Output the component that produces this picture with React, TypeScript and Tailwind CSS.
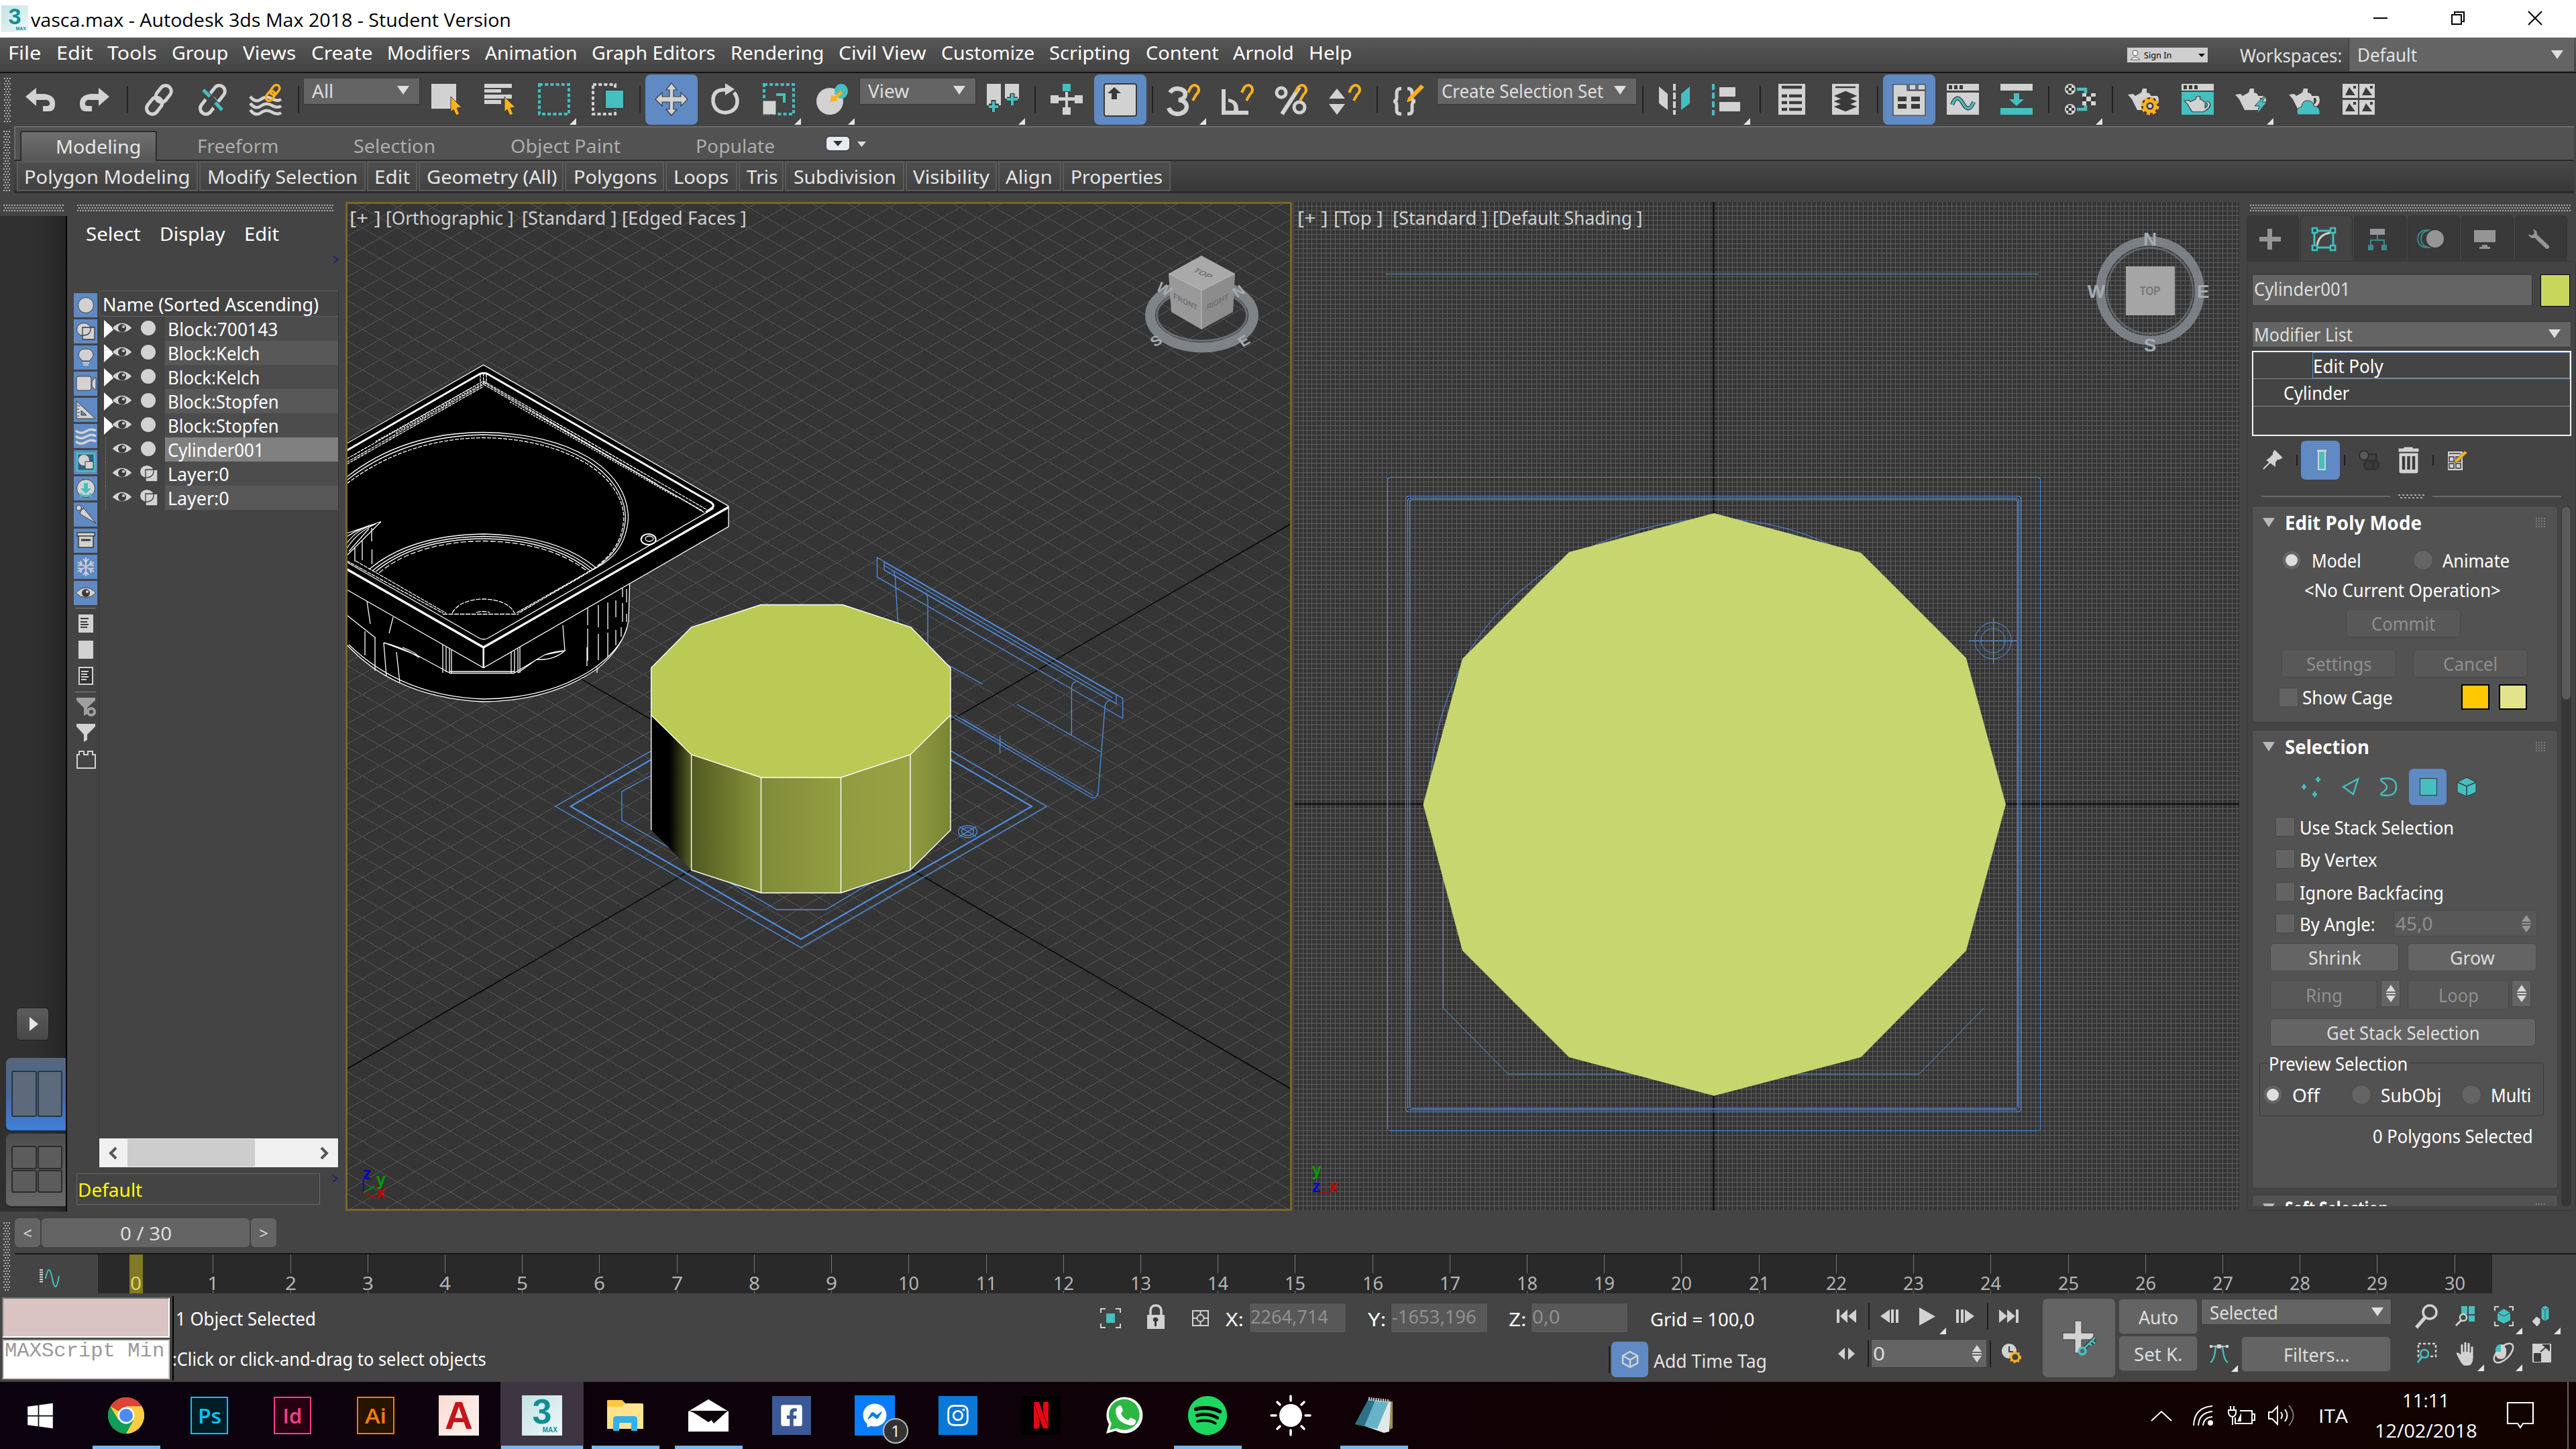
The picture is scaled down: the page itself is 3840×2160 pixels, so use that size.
import React, { useLayoutEffect, useRef, useState, type ReactNode } from "react";
import { FaWindows, FaSpotify, FaFacebookSquare, FaInstagram, FaFacebookMessenger } from "react-icons/fa";
import { SiNetflix } from "react-icons/si";

/* Label that is fitted horizontally to the given width. */
function T({ w, c = "", children }: { w: number; c?: string; children: string }) {
  const ref = useRef<HTMLSpanElement>(null);
  const [sx, setSx] = useState(1);
  useLayoutEffect(() => {
    const el = ref.current;
    if (el && el.offsetWidth) setSx((w + 4) / el.offsetWidth);
  }, [w, children]);
  return (
    <span className={"block shrink-0 whitespace-pre " + c} style={{ width: w }}>
      <span ref={ref} className="-ml-[2px] inline-block origin-left" style={{ transform: "scaleX(" + sx + ")" }}>{children}</span>
    </span>
  );
}

const G = "#d2d2d2";
const C = "#45bfc0";
const O = "#ffb11b";
const D = "#3a3a3a";

function Svg({ c = "h-12 w-12", box = "0 0 48 48", children }: { c?: string; box?: string; children: ReactNode }) {
  return <svg className={"block shrink-0 overflow-visible " + c} viewBox={box} fill="none" preserveAspectRatio="none">{children}</svg>;
}

function Grip({ id, c }: { id: string; c: string }) {
  return (
    <svg className={"block shrink-0 " + c} shapeRendering="crispEdges">
      <defs>
        <pattern id={id} width="4" height="8" patternUnits="userSpaceOnUse">
          <path d="M0 1h2M2 5h2" stroke="#b5b5b5" strokeWidth="1.4" />
        </pattern>
      </defs>
      <rect width="100%" height="100%" fill={"url(#" + id + ")"} />
    </svg>
  );
}

function Down({ c = "h-[13px] w-[18px]", fill = "#dedede" }: { c?: string; fill?: string }) {
  return <Svg c={c} box="0 0 18 13"><path d="M0 0h18L9 13z" fill={fill} /></Svg>;
}

/* ---------------- title, menu ---------------- */

function MaxLogo({ small = false }: { small?: boolean }) {
  return (
    <div className={"flex flex-col bg-gradient-to-br from-[#c3e2e2] to-[#eef8f8] font-['Liberation_Sans',sans-serif] font-bold text-[#0f8f94] " + (small ? "h-10 w-10" : "h-[60px] w-[60px]")}>
      <span className={small ? "h-[31px] text-center text-[34px] leading-[32px]" : "h-[46px] text-center text-[52px] leading-[48px]"}>3</span>
      <span className={small ? "pr-[3px] text-right text-[7px] leading-[8px]" : "pr-[7px] text-right text-[10px] leading-[11px]"}>MAX</span>
    </div>
  );
}

function TitleBar() {
  return (
    <div className="flex h-14 items-start bg-white text-black">
      <div className="ml-[2px] mt-2"><MaxLogo small /></div>
      <T w={712} c="ml-[6px] mt-[9px] font-['Open_Sans',sans-serif] text-[28px] leading-[40px]">vasca.max - Autodesk 3ds Max 2018 - Student Version</T>
      <div className="ml-auto mr-[51px] mt-[17px] flex items-center gap-[95px]">
        <Svg c="h-5 w-[21px]" box="0 0 21 20"><path d="M0 10h21" stroke="#000" strokeWidth="2" /></Svg>
        <Svg c="h-5 w-5" box="0 0 20 20"><path d="M1 5h14v14H1zM5 5V1h14v14h-4" stroke="#000" strokeWidth="2" /></Svg>
        <Svg c="h-5 w-5" box="0 0 20 20"><path d="M0 0l20 20M20 0L0 20" stroke="#000" strokeWidth="2" /></Svg>
      </div>
    </div>
  );
}

const MENUS: [string, number, number][] = [
  ["File", 14, 59], ["Edit", 86, 136], ["Tools", 162, 231], ["Group", 259, 339], ["Views", 366, 441], ["Create", 467, 554],
  ["Modifiers", 581, 700], ["Animation", 726, 859], ["Graph Editors", 886, 1066], ["Rendering", 1093, 1228],
  ["Civil View", 1255, 1381], ["Customize", 1407, 1542], ["Scripting", 1568, 1685], ["Content", 1711, 1815],
  ["Arnold", 1841, 1927], ["Help", 1953, 2013],
];

function MenuBar() {
  return (
    <div className="flex h-[53px] items-start border-b-2 border-[#111] bg-gradient-to-b from-[#575757] to-[#444] text-white">
      <div className="ml-[14px] mt-[6px] flex w-[2030px] gap-[26px] leading-[32px]">
        {MENUS.map(([m, a, b]) => <T key={m} w={b - a + 0.5}>{m}</T>)}
      </div>
      <div className="ml-auto mt-[15px] flex h-[22px] w-[120px] items-center bg-[#cfcfcf] text-black">
        <Svg c="ml-1 h-4 w-4" box="0 0 16 16"><circle cx="8" cy="5" r="4" fill="#fff" stroke="#555" /><path d="M1 15q7-8 14 0z" fill="#fff" stroke="#555" /></Svg>
        <T w={37} c="ml-[7px] text-[13px] leading-[16px]">Sign In</T>
        <Down c="ml-auto mr-[4px] h-[5px] w-[10px]" fill="#000" />
      </div>
      <T w={148} c="ml-[50px] mt-[9px] leading-[34px] text-[#e2e2e2]">Workspaces:</T>
      <div className="ml-[12px] mr-[3px] flex h-[50px] w-[336px] items-center border-l border-[#3b3b3b] bg-[#646464] text-[#e2e2e2]">
        <T w={85} c="ml-[14px]">Default</T>
        <Down c="ml-auto mr-[16px] h-[13px] w-[18px]" />
      </div>
    </div>
  );
}

/* ---------------- toolbar ---------------- */

function Slot({ on = false, fly = false, children }: { on?: boolean; fly?: boolean; children: ReactNode }) {
  return (
    <div className="relative flex h-[79px] w-20 shrink-0 items-start justify-center">
      {on && <div className="absolute left-px top-[2px] h-[75px] w-[78px] rounded-[8px] bg-[#5f8ac3]" />}
      <div className="relative mt-[15px]">{children}</div>
      {fly && <div className="absolute bottom-[2px] right-[7px]"><Svg c="h-[10px] w-[10px]" box="0 0 10 10"><path d="M10 0v10H0z" fill="#e4e4e4" /></Svg></div>}
    </div>
  );
}
const Sep = () => <div className="flex h-[79px] w-[15px] shrink-0 justify-center"><div className="mt-[19px] h-10 w-[2px] bg-[#222]" /></div>;

function Combo({ c, label, w }: { c: string; label: string; w: number }) {
  return (
    <div className={"mt-[7px] flex h-10 shrink-0 items-center border border-[#3a3a3a] bg-[#646464] pb-[3px] text-[#dedede] " + c}>
      <T w={w}>{label}</T>
      <Down c="ml-auto mr-[15px] h-[13px] w-[18px]" />
    </div>
  );
}

const magnet = (x: number, y: number) => (
  <g transform={"translate(" + x + "," + y + ")"}><path d="M2 11L6 3Q12-3 17 3Q20 9 14 14L9 23" stroke={O} strokeWidth="4" /></g>
);
const teapot = (
  <path d="M22 8h6v6q6 1 6 5h10q6 10-6 18l-4 3H14L6 24l-6-7 8-1 3 3 9-5z M37 22v10q6-4 3-10z" fill={G} fillRule="evenodd" />
);
const chain = (
  <>
    <rect x="22" y="2" width="17" height="27" rx="8.5" transform="rotate(38 30 16)" stroke={G} strokeWidth="5" />
    <rect x="9" y="20" width="17" height="27" rx="8.5" transform="rotate(38 17 33)" stroke={G} strokeWidth="5" />
  </>
);

function Toolbar() {
  return (
    <div className="flex h-[79px] items-start bg-[#444]">
      <Grip id="g-tool" c="ml-[6px] mt-[7px] h-[66px] w-[10px]" />
      <div className="ml-[6px] flex">
        <Slot><Svg><path d="M0 20L16 7v9h12q17 2 16 16 0 10-10 10h-8v-8h7q4-1 3-5-2-5-8-4H16v9z" fill={G} /></Svg></Slot>
        <Slot><Svg><path d="M45 20L29 7v9H17Q0 18 1 32q0 10 10 10h8v-8h-7q-4-1-3-5 2-5 8-4h12v9z" fill={G} /></Svg></Slot>
        <Sep />
        <Slot><Svg>{chain}</Svg></Slot>
        <Slot><Svg>{chain}<path d="M12 14l20 22" stroke="#444" strokeWidth="11" /><path d="M10 10l10 10M28 29l10 11" stroke={C} strokeWidth="5" /></Svg></Slot>
        <Slot><Svg><path d="M0 20q8 10 16 4t16-1 14 1M0 30q8 10 16 4t16-1 14 1M0 40q8 10 16 4t16-1 14 1" stroke={G} strokeWidth="4.5" /><rect x="32" y="2" width="10" height="16" rx="5" transform="rotate(38 37 10)" stroke={O} strokeWidth="3.5" /><rect x="25" y="11" width="10" height="16" rx="5" transform="rotate(38 30 19)" stroke={O} strokeWidth="3.5" /></Svg></Slot>
        <Sep />
        <Combo c="w-[174px] pl-[14px]" label="All" w={28} />
        <Slot><Svg><path d="M1 1h37v37H1z" fill={G} /><path d="M30 20l16 16-7 1 4 9-5 2-4-9-4 4z" fill={O} stroke={D} strokeWidth="1" /></Svg></Slot>
        <Slot><Svg><path d="M0 1h41v6H0zM0 9h25v5H0zM0 17h41v6H0zM0 25h25v6H0z" fill={G} /><path d="M30 20l16 16-7 1 4 9-5 2-4-9-4 4z" fill={O} stroke={D} strokeWidth="1" /></Svg></Slot>
        <Slot fly><Svg><path d="M2 2h44v44H2z" stroke={C} strokeWidth="4" strokeDasharray="5 3.2" /></Svg></Slot>
        <Slot><Svg><path d="M2 2h33v44H2z" stroke={G} strokeWidth="4" strokeDasharray="5 3.2" /><path d="M20 10h28v28H20z" fill={C} stroke={D} strokeWidth="2" /></Svg></Slot>
        <Sep />
        <Slot on><Svg><path d="M24 0l8 10h-5v10h11v-6l10 10-10 10v-6H27v11h5l-8 9-8-9h5V28H10v6L0 24l10-10v6h11V10h-5z" fill={G} stroke={D} strokeWidth="1.2" /></Svg></Slot>
        <Slot><Svg><path d="M27 10Q5 8 6 27q2 16 18 17 19-2 18-19-1-7-5-11" stroke={G} strokeWidth="5.5" /><path d="M24 0l14 9-14 9z" fill={G} /></Svg></Slot>
        <Slot fly><Svg><path d="M2 2h44v44H2z" stroke={C} strokeWidth="4" strokeDasharray="5 3.2" /><path d="M0 26h20v21H0z" fill={G} stroke={D} /><path d="M20 17h12v12" stroke={C} strokeWidth="4" /></Svg></Slot>
        <Slot fly><Svg><circle cx="20" cy="27" r="20" fill={G} /><ellipse cx="37" cy="12" rx="10" ry="11" fill={C} /><path d="M38 13L25 24" stroke={O} strokeWidth="5" /><path d="M20 28l3-11 9 9z" fill={O} /></Svg></Slot>
        <Combo c="w-[174px] pl-[14px]" label="View" w={57} />
        <Slot fly><Svg><path d="M0 1h21v32H0zM27 1h21v22H27z" fill={G} /><path d="M10 25v18M3 34h15M38 15v18M30 24h16" stroke={D} strokeWidth="7" /><path d="M10 27v16M3 35h14M38 16v17M30 24h16" stroke={C} strokeWidth="4" /></Svg></Slot>
        <Sep />
        <Slot><Svg><path d="M18 1h12v11H18z" fill={C} /><path d="M22 13h4v23h-4zM0 18h12v3h24v-3h12v12H36v-4H12v4H0zM18 36h12v11H18z" fill={G} /></Svg></Slot>
        <Slot on><Svg><rect width="48" height="48" y="1" rx="3" fill={G} stroke={D} strokeWidth="2" /><path d="M15 6l10 9h-6v9h-8v-9H5z" fill={D} /></Svg></Slot>
        <Sep />
        <Slot fly><Svg><path d="M3 14Q7 8 14 8q12 1 12 9-1 7-10 8 11 1 12 10-1 10-14 11Q4 45 1 37" stroke={G} strokeWidth="6.5" />{magnet(28, 3)}</Svg></Slot>
        <Slot><Svg><path d="M0 9h6v32h12q2-12-8-13v-5q16 2 15 18h15v6H0z" fill={G} />{magnet(28, 3)}</Svg></Slot>
        <Slot><Svg><circle cx="9" cy="14" r="7" stroke={G} strokeWidth="5" /><circle cx="36" cy="36" r="8" stroke={G} strokeWidth="5" /><path d="M36 6L10 46" stroke={G} strokeWidth="6" />{magnet(28, 3)}</Svg></Slot>
        <Slot><Svg><path d="M12 8l12 15H0zM12 47L0 31h24z" fill={G} />{magnet(28, 3)}</Svg></Slot>
        <Sep />
        <Slot><Svg><path d="M13 8Q6 8 6 14v8q0 5-5 5 5 0 5 6v8q0 5 7 5M22 8q7 0 7 6v8q0 5 5 5-5 0-5 6v8q0 5-7 5" stroke={G} strokeWidth="5" /><path d="M42 2l5 4-21 21-5 1 2-6z" fill={O} /></Svg></Slot>
        <Combo c="ml-[2px] w-[298px] pl-[8px]" label="Create Selection Set" w={237} />
        <div className="w-px" />
        <Sep />
        <Slot><Svg><path d="M1 5l13 11v24L1 30z" fill={G} /><path d="M47 5L34 16v24l13-10z" fill={C} /><path d="M24 1v46" stroke={G} strokeWidth="4" strokeDasharray="10 3" /></Svg></Slot>
        <Slot fly><Svg><path d="M2 1v47" stroke={C} strokeWidth="4" strokeDasharray="9 4" /><path d="M11 6h24v14H11zM11 28h31v14H11z" fill={G} /></Svg></Slot>
        <Sep />
        <Slot><Svg><path d="M4 1h40v46H4z" fill={G} /><path d="M9 6h30M9 19h8m3 0h19M9 29h8m3 0h19M9 39h8m3 0h19" stroke={D} strokeWidth="4.5" /></Svg></Slot>
        <Slot><Svg><path d="M4 1h40v46H4z" fill={G} /><path d="M9 6h30M24 13l14 6-14 6-14-6zM10 27l14 6 14-6-14-5zM10 35l14 6 14-6-14-5z" fill={D} stroke={D} strokeWidth="2.5" /></Svg></Slot>
        <Sep />
        <Slot on><Svg><path d="M0 2h21v9h27v37H0zM24 2h10v8H24zM37 2h11v8H37z" fill={G} stroke={D} strokeWidth="1.2" /><path d="M7 20h13v7H7zM27 20h13v7H27zM7 31h13v7H7zM27 31h13v7H27z" fill={D} /></Svg></Slot>
        <Slot><Svg><path d="M0 1h48v10H0zM0 14h48v33H0z" fill={G} /><path d="M3 3h5v6H3zM11 3h5v6h-5zM19 3h5v6h-5z" fill={D} /><path d="M8 32q7-18 16-2t16-2" stroke={D} strokeWidth="6" /><path d="M8 32q7-18 16-2t16-2" stroke={C} strokeWidth="3.5" /></Svg></Slot>
        <Slot><Svg><path d="M0 1h48v10H0z" fill={G} /><path d="M20 15h8v9h7L24 34 13 24h7zM0 37h48v10H0z" fill={C} /></Svg></Slot>
        <Sep />
        <Slot fly><Svg><circle cx="9" cy="9" r="8" fill={G} /><circle cx="9" cy="39" r="8" fill={G} /><path d="M19 9h13v6M19 39h13v-6" stroke={C} strokeWidth="4.5" /><path d="M27 15h20v18H27z" fill={G} /><path d="M6 3h5v4H6zM3 7h4v4H3zM11 7h4v4h-4zM6 11h5v4H6zM6 33h5v4H6zM3 37h4v4H3zM11 37h4v4h-4zM6 41h5v4H6zM33 15h7v5h-7zM27 20h6v7h-6zM40 20h7v7h-7zM33 27h7v6h-7z" fill={D} /></Svg></Slot>
        <Sep />
        <Slot><Svg>{teapot}<circle cx="33" cy="34" r="8" stroke={D} strokeWidth="10" /><circle cx="33" cy="34" r="11.5" stroke={O} strokeWidth="4" strokeDasharray="5 4" /><circle cx="33" cy="34" r="8" stroke={O} strokeWidth="5" /></Svg></Slot>
        <Slot><Svg><path d="M0 1h48v10H0z" fill={G} /><path d="M3 3h5v6H3zM11 3h5v6h-5zM19 3h5v6h-5z" fill={D} /><path d="M0 13h48v34H0z" fill={C} /><g transform="translate(4,14) scale(.84 .72)" stroke={D} strokeWidth="1.5">{teapot}</g></Svg></Slot>
        <Slot fly><Svg>{teapot}<path d="M42 20L29 34h7l-4 13 15-19h-7l5-8z" fill={C} stroke={D} /></Svg></Slot>
        <Slot><Svg>{teapot}<path d="M13 47q-4-10 6-12 1-10 10-9 8 1 8 8 11 1 9 13z" fill={C} stroke={D} /></Svg></Slot>
        <Slot><Svg><path d="M0 1h23v21H0zM25 1h23v21H25zM0 25h23v22H0zM25 25h23v22H25z" fill={G} /><path d="M4 18l6-12 9 12zM29 18l6-12 9 12zM4 42l6-12 9 12zM29 42l6-12 9 12z" fill={D} /><path d="M16 4h4v4h-4zM41 4h4v4h-4zM16 28h4v4h-4zM41 28h4v4h-4z" fill={D} /></Svg></Slot>
      </div>
    </div>
  );
}

/* ---------------- ribbon ---------------- */

const PANELS: [string, string, number][] = [
  ["Polygon Modeling", "w-[270px] pl-[11px]", 243], ["Modify Selection", "w-[248px] pl-[12px]", 220], ["Edit", "w-[75px] pl-[11px]", 49],
  ["Geometry (All)", "w-[216px] pl-[12px]", 190], ["Polygons", "w-[148px] pl-[13px]", 120], ["Loops", "w-[107px] pl-[12px]", 78],
  ["Tris", "w-[67px] pl-[12px]", 42], ["Subdivision", "w-[178px] pl-[13px]", 149], ["Visibility", "w-[136px] pl-[11px]", 110],
  ["Align", "w-[94px] pl-[11px]", 66], ["Properties", "w-[161px] pl-[12px]", 133],
];

function Ribbon() {
  return (
    <div className="flex h-[100px]">
      <Grip id="g-rib" c="ml-[5px] mt-[7px] h-[90px] w-[10px]" />
      <div className="ml-[6px] mr-[3px] flex-1">
        <div className="flex h-[50px] items-start border-l-2 border-t-2 border-[#6b6b6b] bg-[#525252] text-[#adadad]">
          <div className="ml-[7px] mt-[5px] flex h-[45px] w-[204px] items-center rounded-t border-2 border-b-0 border-[#2c2c2c] bg-gradient-to-b from-[#707070] to-[#565656] pb-[2px] text-[#e6e6e6]"><T w={123} c="ml-[53px]">Modeling</T></div>
          <div className="mt-[7px] flex h-[42px] items-center pb-[3px]">
            <T w={117} c="ml-[62px]">Freeform</T>
            <T w={118} c="ml-[116px]">Selection</T>
            <T w={160} c="ml-[116px]">Object Paint</T>
            <T w={114} c="ml-[116px]">Populate</T>
          </div>
          <div className="ml-[79px] mt-[14px] flex h-5 w-[34px] items-center justify-center rounded-[5px] bg-[#e8ecf2] shadow-[0_0_3px_#2a3040]"><Down c="h-[8px] w-[14px]" fill="#333" /></div>
          <Down c="ml-[12px] mt-[21px] h-[8px] w-[13px]" />
        </div>
        <div className="flex h-[50px] items-start gap-[2px] border-b-[3px] border-t-2 border-[#2a2a2a] bg-gradient-to-b from-[#484848] to-[#383838] pl-[4px] text-[#e6e6e6]">
          {PANELS.map(([n, c, w]) => (
            <div key={n} className={"flex h-[45px] shrink-0 items-center border-2 border-[#5c5c5c] bg-gradient-to-b from-[#4e4e4e] to-[#424242] " + c}><T w={w}>{n}</T></div>
          ))}
        </div>
      </div>
    </div>
  );
}

/* ---------------- scene explorer ---------------- */

function ViewTabs() {
  return (
    <div className="flex w-[100px] shrink-0 flex-col">
      <Grip id="g-vt" c="ml-[5px] mt-[17px] h-[10px] w-[90px]" />
      <div className="mt-[7px] flex h-[1484px] flex-col border-r-2 border-black bg-gradient-to-r from-[#303030] via-[#303030] to-[#262626]">
        <div className="ml-6 mt-[1180px] flex h-[49px] w-[49px] items-center justify-center rounded-[6px] border border-[#222] bg-gradient-to-b from-[#5c5c5c] to-[#484848]">
          <Svg c="ml-[3px] h-[21px] w-[13px]" box="0 0 13 21"><path d="M0 0l13 10.5L0 21z" fill="#e8e8e8" /></Svg>
        </div>
        <div className="ml-[9px] mt-[26px] flex h-[110px] gap-[1px] rounded-l-[8px] border-b-2 border-[#1a2a44] bg-gradient-to-b from-[#56667c] via-[#45699f] to-[#3f80da] pb-[20px] pl-[8px] pr-[5px] pt-[19px]">
          <div className="flex-1 rounded-[3px] border-2 border-[#2a3442] bg-[#5d6a7b]" />
          <div className="flex-1 rounded-[3px] border-2 border-[#2a3442] bg-[#5d6a7b]" />
        </div>
        <div className="ml-[9px] mt-[3px] grid h-[110px] grid-cols-2 gap-[1px] rounded-l-[8px] border-b-2 border-[#222] bg-gradient-to-b from-[#4e4e4e] to-[#686868] pb-[20px] pl-[8px] pr-[5px] pt-[18px]">
          {[0, 1, 2, 3].map(i => <div key={i} className="rounded-[3px] border-2 border-[#2c2c2c] bg-[#5c5c5c]" />)}
        </div>
      </div>
    </div>
  );
}

const eye = (
  <>
    <path d="M0 10Q15-6 30 10 15 24 0 10z" fill={G} stroke={D} strokeWidth="1" />
    <circle cx="15" cy="10" r="6" fill={D} /><circle cx="17" cy="8" r="2" fill={G} />
  </>
);
const shape = <><ellipse cx="11" cy="10" rx="10.5" ry="9.5" fill={G} stroke={D} /><path d="M9 7h18v18H9z" fill={G} /><path d="M9 16V7h18v18H9zM9 19q13 0 12-12" stroke={D} strokeWidth="1.3" /></>;

const FILTERS: ReactNode[] = [
  <circle cx="15" cy="15" r="11.5" fill={G} stroke={D} />,
  <g transform="translate(1,2)">{shape}</g>,
  <><path d="M10 20Q4 14 4 11q1-9 11-9t11 9q0 3-6 9z" fill={G} stroke={D} /><path d="M10 23h10M11 26h8" stroke={G} strokeWidth="2" /></>,
  <><rect x="1" y="4" width="22" height="21" rx="3" fill={G} stroke={D} /><path d="M24 11l6-6v20l-6-6z" fill={G} stroke={D} /></>,
  <><path d="M1 2l28 26H1z" fill={G} stroke={D} /><path d="M8 16l8 7H8z" fill="#5f8ac3" stroke={D} /><path d="M2 9h4M2 14h3M2 19h4M2 24h3" stroke={D} /></>,
  <path d="M0 7q7 6 15 1t15-1M0 15q7 6 15 1t15-1M0 23q7 6 15 1t15-1" stroke={G} strokeWidth="3.5" />,
  <><path d="M2 2h26v26H2z" fill="#3b5a80" stroke={C} strokeWidth="3" /><circle cx="12" cy="12" r="8" fill={G} /><path d="M14 14h12v11H14z" fill={G} stroke={D} /></>,
  <><circle cx="15" cy="15" r="13.5" fill={G} stroke={D} /><path d="M12 7h6v8h5l-8 8-8-8h5z" fill={C} /><path d="M8 22v4h14v-4" stroke={C} strokeWidth="3" /></>,
  <><circle cx="4.5" cy="5" r="4" fill={G} stroke={D} /><path d="M10 7q-3 2-4 7l24 14L12 6z" fill={G} stroke={D} /></>,
  <><path d="M2 3h26v5H2zM4 8h22v17H4z" fill={G} stroke={D} strokeWidth="1.5" /><path d="M8 14h14" stroke={D} strokeWidth="3" /></>,
  <path d="M15 1v28M3 8l24 14M27 8L3 22M11 3l4 5 4-5M11 27l4-5 4 5M3 13l6-1-2-6M27 13l-6-1 2-6M3 17l6 1-2 6M27 17l-6 1 2 6" stroke={G} strokeWidth="2" />,
  <g transform="translate(0,5)">{eye}</g>,
];

const NODES: [string, number, boolean, boolean][] = [
  ["Block:700143", 160, true, false], ["Block:Kelch", 133, true, false], ["Block:Kelch", 133, true, false], ["Block:Stopfen", 162, true, false],
  ["Block:Stopfen", 162, true, false], ["Cylinder001", 139, false, false], ["Layer:0", 88, false, true], ["Layer:0", 88, false, true],
];
const ROWBG = ["bg-[#4c4c4c]", "bg-[#585858]", "bg-[#4c4c4c]", "bg-[#585858]", "bg-[#4c4c4c]", "bg-[#808080]", "bg-[#4c4c4c]", "bg-[#585858]"];

function Explorer() {
  return (
    <div className="flex w-[415px] shrink-0 flex-col text-white">
      <Grip id="g-ex" c="ml-[15px] mt-[17px] h-[10px] w-[382px]" />
      <div className="ml-[30px] mt-[17px] flex h-[32px] items-center">
        <T w={78}>Select</T><T w={94} c="ml-[32px]">Display</T><T w={48} c="ml-[32px]">Edit</T>
      </div>
      <Svg c="ml-[396px] mt-[17px] h-[12px] w-[9px]" box="0 0 9 12"><path d="M1 1l7 5-7 5" stroke="#24246a" strokeWidth="2" /></Svg>
      <div className="mt-[40px] flex">
        <div className="ml-[10px] flex w-[35px] flex-col pt-[4px]">
          {FILTERS.map((f, i) => (
            <div key={i} className="mb-[3px] flex h-9 w-[35px] items-center justify-center bg-[#5f8ac3]"><Svg c="h-[30px] w-[30px]" box="0 0 30 30">{f}</Svg></div>
          ))}
          <div className="mx-[2px] mt-[1px] h-px bg-[#888]" />
          <Svg c="ml-[7px] mt-[9px] h-[27px] w-[22px]" box="0 0 22 27"><path d="M0 0h22v27H0z" fill={G} /><path d="M3 6h12M3 11h10M3 15h12M3 19h10" stroke={D} strokeWidth="2" /></Svg>
          <Svg c="ml-[7px] mt-[12px] h-[27px] w-[22px]" box="0 0 22 27"><path d="M0 0h22v27H0z" fill={G} /></Svg>
          <Svg c="ml-[7px] mt-[12px] h-[27px] w-[22px]" box="0 0 22 27"><path d="M1 1h20v25H1z" fill="#333" stroke={G} strokeWidth="2" /><path d="M4 7h11M4 11h9M4 15h11M4 19h8" stroke={G} strokeWidth="2" /></Svg>
          <div className="mx-[2px] mt-[10px] h-px bg-[#888]" />
          <Svg c="ml-[4px] mt-[8px] h-[28px] w-[29px]" box="0 0 29 28"><path d="M0 0h28v4L16 15v9l-5 3V15L0 4z" fill="#a0a0a0" /><circle cx="22" cy="21" r="5" stroke="#a0a0a0" strokeWidth="4" /></Svg>
          <Svg c="ml-[4px] mt-[11px] h-[28px] w-[28px]" box="0 0 28 28"><path d="M0 0h28v4L16 16v8l-5 3V16L0 4z" fill={G} /></Svg>
          <Svg c="ml-[4px] mt-[11px] h-[28px] w-[29px]" box="0 0 29 28"><path d="M1 27V7h3V2h7v5h6V2h7v5h4v20z" stroke={G} strokeWidth="2" /></Svg>
        </div>
        <div className="ml-[2px] flex h-[1307px] w-[358px] flex-col border-x border-[#353535]">
          <div className="flex h-[39px] items-center border border-r-0 border-[#606060]"><T w={318} c="ml-[6px]">Name (Sorted Ascending)</T></div>
          {NODES.map(([n, w, exp, layer], i) => (
            <div key={i} className="flex h-9 items-center">
              <div className="ml-[7px] flex w-[12px] justify-start">
                {exp ? <Svg c="h-[27px] w-[15px]" box="0 0 15 27"><path d="M0 0l15 13.500L0 27z" fill="#fff" /></Svg> : <div className="ml-[2px] h-9 w-[10px] border-l border-dotted border-[#777]" />}
              </div>
              <Svg c="mb-[2px] h-[20px] w-[30px]" box="0 0 30 20">{eye}</Svg>
              <div className="ml-[11px] flex w-[38px] items-center">
                {layer ? <Svg c="h-[27px] w-[27px]" box="0 0 27 27">{shape}</Svg> : <Svg c="mb-[3px] ml-[2px] h-[22px] w-[22px]" box="0 0 22 22"><circle cx="11" cy="11" r="11" fill={G} /></Svg>}
              </div>
              <div className={"flex h-9 flex-1 items-center pl-[6px] " + ROWBG[i]}><T w={w}>{n}</T></div>
            </div>
          ))}
          <div className="mt-auto flex h-[43px] items-center bg-[#f0f0f0]">
            <Svg c="ml-[12px] h-[18px] w-[16px]" box="0 0 16 18"><path d="M13 1L5 9l8 8" stroke="#555" strokeWidth="4" /></Svg>
            <div className="ml-[14px] h-[41px] w-[190px] bg-[#cdcdcd]" />
            <Svg c="ml-auto mr-[12px] h-[18px] w-[16px]" box="0 0 16 18"><path d="M3 1l8 8-8 8" stroke="#555" strokeWidth="4" /></Svg>
          </div>
        </div>
      </div>
      <div className="ml-[14px] mt-[9px] flex items-start">
        <div className="flex h-[47px] w-[363px] items-center border border-[#666] text-[#ffff00]"><T w={92} c="ml-[3px] mt-[1px]">Default</T></div>
        <Svg c="ml-[18px] mt-[2px] h-[12px] w-[9px]" box="0 0 9 12"><path d="M1 1l7 5-7 5" stroke="#24246a" strokeWidth="2" /></Svg>
      </div>
    </div>
  );
}

/* ---------------- viewports ---------------- */

const OX = 1195, OY = 1202, K = 0.5774;
function isoGrid() {
  let d = "";
  for (let i = -70; i <= 70; i++) {
    const x = OX + i * 52.4;
    d += "M" + (x - 1600) + " " + (OY - 1600 * K) + "L" + (x + 1600) + " " + (OY + 1600 * K);
    d += "M" + (x - 1600) + " " + (OY + 1600 * K) + "L" + (x + 1600) + " " + (OY - 1600 * K);
  }
  return d;
}
function topGrid() {
  let d = "";
  for (let i = -135; i <= 135; i++) {
    const x = Math.round(2554 + i * 6.96) + 0.5;
    const y = Math.round(1198 + i * 6.96) + 0.5;
    d += "M" + x + " 301V1804M1930 " + y + "H3338";
  }
  return d;
}
const B = "#4f8fe8";

function LabelBar({ c, items }: { c: string; items: [string, number, string][] }) {
  return <div className={"absolute flex leading-[32px] text-[#d0d0d0] " + c}>{items.map(([t, w, m]) => <T key={t} w={w} c={m}>{t}</T>)}</div>;
}

function OrthoView() {
  return (
    <div className="relative mt-[13px] h-[1504px] w-[1411px] shrink-0 overflow-hidden bg-[#353535]">
      <svg className="block h-full w-full" viewBox="515 301 1411 1504" fill="none">
        <defs>
          <linearGradient id="s1"><stop offset=".45" stopColor="#000" /><stop offset="1" stopColor="#5a6327" /></linearGradient>
          <linearGradient id="s2"><stop offset="0" stopColor="#525a22" /><stop offset="1" stopColor="#87933b" /></linearGradient>
          <linearGradient id="s3"><stop offset="0" stopColor="#808b38" /><stop offset="1" stopColor="#939f41" /></linearGradient>
          <linearGradient id="s4"><stop offset="0" stopColor="#909c40" /><stop offset="1" stopColor="#96a243" /></linearGradient>
          <linearGradient id="s5"><stop offset="0" stopColor="#909c40" /><stop offset="1" stopColor="#7a8534" /></linearGradient>
        </defs>
        <path d={isoGrid()} stroke="#525252" strokeWidth="1" shapeRendering="crispEdges" />
        <path d={"M115 " + (OY + 1080 * K) + "L2275 " + (OY - 1080 * K) + "M115 " + (OY - 1080 * K) + "L2275 " + (OY + 1080 * K)} stroke="#000" strokeWidth="1.4" />

        {/* shower tray */}
        <path d="M517 961V659L720.7 544 1086 754.500V785L938.600 870.500 937 925Q930 965 889.500 997.500 820 1045 720.700 1046 590 1040 517 961z" fill="#000" />
        <g stroke="#fff" strokeWidth="1.3">
          <path d="M517 661L720.700 544 1086 754.500V785L720.700 995.600 517 879" />
          <path d="M938.600 870.500L937 925Q930 965 889.500 997.500 820 1045 720.700 1046 590 1040 517 961M935 935Q925 970 880 1000 815 1041 720.700 1042 600 1038 520 961" />
          <path d="M720.700 965V995.600" strokeWidth="2.500" />
          <path d="M517 671.500L715 557.500Q720.700 555 727 557.500L1060 749Q1067 754 1060 758L1052 764" strokeWidth="3" />
          <path d="M517 848.500L720.700 965 1086 756" strokeWidth="3.400" />
          <path d="M517 838L714 951Q720.700 955 728 951L1064 758" />
          <path d="M517 684L720.700 568 1054 760M517 689L720.700 573 1048 762M517 692L720.700 576M720.700 570L1050 764M716 558v14M720.700 556v18M725 558v14" strokeDasharray="5 1" />
          <path d="M590 645L720.700 571M560 658L700 580M760 599L1010 742M800 617L980 722" strokeDasharray="3 1.500" />
          <path d="M517 711Q600 645 720.700 644.500C850 646 936 700 936.500 772 934 815 910 835 889 846.500" />
          <path d="M517 716Q600 650 720.700 648C845 650 931 703 932.500 772 930 813 908 832 889 846.500" />
          <path d="M517 721Q605 654 720.700 652.500C840 654 928 706 930 772 927 815 905 832 885 848" strokeDasharray="6 2" />
          <path d="M550 849Q610 798 720.700 796 830 798 888 846M555 851Q615 801 720.700 799.500 825 801 884 849M560 852Q618 804 720.700 803 822 804 880 851" />
          <path d="M565 854Q620 808 720.700 806.500 820 808 876 852" strokeDasharray="8 3" />
          <path d="M889 846.500L773 914M885 848L769 914M517 836L660 914M530 836L665 914" strokeDasharray="6 1" />
          <path d="M660 915.500H773M674 914Q685 894 720.700 893 757 894 767 914M710 913q10-3 20 0" strokeDasharray="7 1.500" />
          <path d="M517 795L568 777.500 517 828M517 800Q540 785 560 781M517 810Q530 790 560 781M517 818Q530 795 560 781M520 822L550 788M554 787v20M540 806v29M529 815v22M554.500 819v22" />
          <path d="M517 917L560 951M547 896L552 930M586 920L580 944M544 941v36M559 950v50M572 958L576 1008M591 972L596 1018M572 958L622 977 670 1003M572 958Q600 965 625 980M660 961v42M665 964v38M670 967v36M673 969v34M670 1001h97M670 1003.500h97M762 972v31M767 970v33M772 967v36M775 965v38M767 1003L812 976 842 970Q825 985 800 983L772 1003M839 932L842 970M812 976q15-5 30-6M600 965q20 8 22 12" />
          <path d="M876 907V932M876 937V985M892 902V935M892 945V984M875 965V993M890 995v8M906 898v40M906 943v36M918 895v25M918 939v23M928 877v13M928 899v28M934 878v20M934 915v12M926 935v14" />
          <ellipse cx="966.700" cy="804" rx="11" ry="8" strokeWidth="2" /><ellipse cx="968" cy="803" rx="6" ry="4" />
        </g>

        {/* wire outlines */}
        <g stroke={B} strokeWidth="1.300">
          <path d="M1194 990L1560 1202 1194 1412.600 828 1202z" />
          <path d="M1194 1003L1538 1202 1194 1400 850.500 1202z" strokeWidth="2.200" />
          <path d="M970.700 1156L927 1180V1223L1158 1356H1231L1300 1315" />
          <ellipse cx="1442.500" cy="1239.600" rx="14" ry="9" /><ellipse cx="1442.500" cy="1239.600" rx="9" ry="6" /><path d="M1430 1232l25 15M1455 1232l-25 15" />
          <path d="M1307.500 831L1673.700 1041V1071L1307.500 860z" />
          <path d="M1318 838L1664 1036V1049L1318 849.500zM1318 843L1658 1040M1332 857L1600 1012" />
          <path d="M1332 851.600Q1335 858 1335 870L1338.600 929M1381 885Q1383 890 1383 896V961M1411 990L1465 1020M1516 1050L1641 1121M1597.400 1096V1025Q1598 1017 1604 1016M1654 1044Q1647 1046 1647 1055L1637 1182Q1635 1191 1627 1189L1417 1067M1630 1186L1423 1066M1490.600 1096.500V1122.600M1435 1072L1545 1137" />
        </g>

        {/* cylinder */}
        <path d="M970.700 1066L1030.600 1125V1297L970.700 1237.500z" fill="url(#s1)" />
        <path d="M1030.600 1125L1134.500 1159V1331L1030.600 1297z" fill="url(#s2)" />
        <path d="M1134.500 1159H1253.500V1331H1134.500z" fill="url(#s3)" />
        <path d="M1253.500 1159L1357 1125V1297L1253.500 1331z" fill="url(#s4)" />
        <path d="M1357 1125L1417 1066V1237.500L1357 1297z" fill="url(#s5)" />
        <path d="M1134 901.500H1256L1358 935 1417 995.500V1066L1357 1125 1253.500 1159H1134.500L1030.600 1125 970.700 1066V995.500L1030.600 935z" fill="#bbca54" stroke="#fff" strokeWidth="1.400" />
        <path d="M970.700 1066V1237.500M1030.600 1125V1297L1134.500 1331H1253.500L1357 1297V1125M1134.500 1159V1331M1253.500 1159V1331M1357 1297L1417 1237.500V1066" stroke="#fff" strokeWidth="1.400" />

        {/* view cube */}
        <ellipse cx="1791.500" cy="470" rx="77" ry="48" stroke="#8b9097" strokeWidth="15" opacity=".85" />
        <ellipse cx="1791.500" cy="470" rx="67" ry="38" stroke="#6b6f75" strokeWidth="3" />
        <path d="M1791 381L1841 408 1791 433 1742 408z" fill="#a9a9a9" />
        <path d="M1742 408L1791 433V491L1746 465z" fill="#999" />
        <path d="M1841 408L1791 433V491L1838 465z" fill="#8c8c8c" />
        <path d="M1742 408L1791 433 1841 408M1791 433V491" stroke="#bdbdbd" />
        <g fontFamily="Liberation Sans, sans-serif" fontWeight="bold" fill="#6f7276" textAnchor="middle">
          <text transform="matrix(.87 .4 -.7 .5 1790 410)" fontSize="14">TOP</text>
          <text transform="matrix(.87 .45 0 1 1767 454)" fontSize="12">FRONT</text>
          <text transform="matrix(.87 -.45 0 1 1815 454)" fontSize="12">RIGHT</text>
          <g fill="#a7abb0" fontSize="22">
            <text transform="matrix(.87 .5 -.6 .8 1731 437)">W</text><text transform="matrix(.87 -.5 .6 .8 1851 440)">N</text>
            <text transform="matrix(.87 -.5 .6 .8 1728 514)">S</text><text transform="matrix(.87 -.5 .6 .8 1859 514)">E</text>
          </g>
        </g>

        {/* axis tripod */}
        <path d="M541.500 1778V1759" stroke="#0000c8" strokeWidth="1.500" /><path d="M541.500 1778L559 1768" stroke="#00a000" strokeWidth="1.500" /><path d="M541.500 1778L561 1786" stroke="#c80000" strokeWidth="1.500" />
        <g fontFamily="Noto Sans, sans-serif" fontSize="25" fontWeight="600"><text x="541" y="1758" fill="#0000c8">z</text><text x="561" y="1767" fill="#00a000">y</text><text x="561" y="1786" fill="#c80000">x</text></g>
      </svg>
      <div className="pointer-events-none absolute inset-0 border-[3px] border-[#7b6626]" />
      <LabelBar c="left-[8px] top-[7px]" items={[["[+ ]", 43, ""], ["[Orthographic ]", 187, "ml-[11px]"], ["[Standard ]", 137, "ml-[16px]"], ["[Edged Faces ]", 182, "ml-[12px]"]]} />
    </div>
  );
}

function TopView() {
  return (
    <div className="relative ml-1 mt-[13px] h-[1503px] w-[1408px] shrink-0 overflow-hidden bg-[#353535]">
      <svg className="block h-full w-full" viewBox="1930 301 1408 1503" fill="none">
        <path d={topGrid()} stroke="#5e5e5e" strokeWidth="1" shapeRendering="crispEdges" />
        <path d="M2554.500 301V1804M1930 1198.500H3338" stroke="#0a0a0a" strokeWidth="2" />
        <g stroke={B} strokeWidth="1" shapeRendering="crispEdges">
          <path d="M2065 408.500H3039" />
          <rect x="2068.500" y="711.500" width="973" height="974" rx="4" />
          <rect x="2095.500" y="739.500" width="917" height="918" rx="5" />
          <rect x="2098.500" y="742.500" width="911" height="912" rx="4" />
          <rect x="2101.500" y="744.500" width="906" height="908" rx="4" />
        </g>
        <g stroke={B} strokeWidth="1">
          <path d="M2151.500 1290V1503L2248 1601H2861L2957 1503" />
          <path d="M2130 1230Q2124 950 2340 830 2440 778 2555 772 2660 776 2740 818" />
          <circle cx="2971" cy="955" r="27" /><circle cx="2971" cy="955" r="18" /><path d="M2935 955.500h72M2971.500 920v70" />
        </g>
        <path d="M2555 765L2774 824 2931 981 2990 1199 2931 1417 2774 1576 2555 1633.500 2339 1576 2180 1417 2121.500 1199 2180 982 2339 823z" fill="#c8d66f" />
        <g opacity=".85">
          <circle cx="3205" cy="433.500" r="74" stroke="#858b94" strokeWidth="14" />
          <circle cx="3205" cy="433.500" r="64" stroke="#686c72" strokeWidth="3" />
        </g>
        <path d="M3169 397h73v73h-73z" fill="#a5a5a5" />
        <g fontFamily="Liberation Sans, sans-serif" fontWeight="bold" textAnchor="middle">
          <text x="3205" y="440" fontSize="18" fill="#74777c" textLength="31" lengthAdjust="spacingAndGlyphs">TOP</text>
          <g fontSize="28" fill="#a7abb0"><text x="3205" y="366">N</text><text x="3205" y="524">S</text><text x="3125" y="444">W</text><text x="3284" y="444">E</text></g>
        </g>
        <path d="M1967 1777h15" stroke="#c80000" strokeWidth="1.500" />
        <g fontFamily="Noto Sans, sans-serif" fontSize="25" fontWeight="600"><text x="1956" y="1752" fill="#00a000">y</text><text x="1956" y="1777" fill="#0000c8">z</text><text x="1981" y="1777" fill="#c80000">x</text></g>
      </svg>
      <LabelBar c="left-[6px] top-[7px]" items={[["[+ ]", 42, ""], ["[Top ]", 69, "ml-[12px]"], ["[Standard ]", 137, "ml-[19px]"], ["[Default Shading ]", 220, "ml-[12px]"]]} />
    </div>
  );
}

/* ---------------- command panel ---------------- */

function Check() { return <div className="h-[29px] w-[29px] shrink-0 border border-[#4a4a4a] bg-[#636363]" />; }
function Radio({ on = false }: { on?: boolean }) {
  return <div className="flex h-[30px] w-[30px] shrink-0 items-center justify-center rounded-full border border-[#4a4a4a] bg-[#646464]">{on && <div className="h-[18px] w-[18px] rounded-full bg-[#dedede]" />}</div>;
}
function Btn({ c, w, off = false, children }: { c: string; w: number; off?: boolean; children: string }) {
  return <div className={"flex shrink-0 items-center justify-center rounded-[6px] border border-[#4a4a4a] " + (off ? "bg-[#585858] text-[#8f8f8f] " : "bg-[#646464] text-[#dedede] ") + c}><T w={w}>{children}</T></div>;
}
function Spin({ fill = "#dedede" }: { fill?: string }) {
  return <Svg c="h-[26px] w-[14px]" box="0 0 14 26"><path d="M7 0l7 10H0zM7 26L0 16h14zM0 12h14v2H0z" fill={fill} fillOpacity=".95" /></Svg>;
}
function Head({ w, children }: { w: number; children: string }) {
  return (
    <div className="flex h-7 items-center">
      <Down c="ml-[15px] h-[14px] w-[18px]" fill="#b8b8b8" />
      <T w={w} c="ml-[17px] font-bold">{children}</T>
      <svg className="ml-auto mr-[18px] h-[14px] w-[14px]" viewBox="0 0 14 14"><path d="M0 1h14M0 5h14M0 9h14M0 13h14" stroke="#8c8c8c" strokeWidth="1.500" strokeDasharray="2 2" /></svg>
    </div>
  );
}
const M = "#959595";
const TABS: ReactNode[] = [
  <path d="M12 1h7v12h13v7H19v12h-7V20H0v-7h12z" fill={M} />,
  <><path d="M2 4h28v25H2z" stroke={C} strokeWidth="3" /><path d="M6 27Q8 9 26 7" stroke={G} strokeWidth="3" /><path d="M-1 0h7v7h-7zM26 0h7v7h-7zM-1 26h7v7h-7zM26 26h7v7h-7z" fill="#444" stroke={C} strokeWidth="2.500" /></>,
  <><path d="M5 1h22v9H5z" fill={M} /><path d="M16 10v8M6 25v-7h20v7" stroke="#3c8a8c" strokeWidth="2" /><path d="M2 25h8v8H2zM22 25h8v8h-8z" fill="#3c8a8c" /></>,
  <><circle cx="9" cy="16" r="13" stroke="#3c8a8c" strokeWidth="2" /><circle cx="14" cy="16" r="13" stroke="#3c8a8c" strokeWidth="2" /><circle cx="22" cy="16" r="14" fill={M} stroke="#393939" strokeWidth="2" /></>,
  <path d="M0 3h32v18H0zM12 25h8v3h4v3H8v-3h4z" fill={M} />,
  <><path d="M12 12L29 28" stroke={M} strokeWidth="6" strokeLinecap="round" /><path d="M8 2q6 1 6 7t-7 6q-5-1-6-6l5 2 4-3-1-4z" fill={M} /></>,
];

function CommandPanel() {
  return (
    <div className="ml-[11px] w-[491px] shrink-0">
      <Grip id="g-cp" c="ml-[5px] mt-[17px] h-[10px] w-[478px]" />
      <div className="mt-[6px] flex h-[68px] gap-[2px]">
        {TABS.map((t, i) => (
          <div key={i} className={"flex h-[68px] w-[78px] justify-center rounded-t-[6px] border-x border-t border-[#353535] " + (i === 1 ? "bg-[#444]" : "bg-[#393939]")}>
            <Svg c="-ml-[9px] mt-[18px] h-8 w-8" box="0 0 32 32">{t}</Svg>
          </div>
        ))}
      </div>
      <div className="h-[1416px] rounded-b-[6px] rounded-tr-[6px] border border-[#373737] pl-[7px] pt-[19px]">
        <div className="flex">
          <div className="flex h-[47px] w-[418px] items-center border border-[#3b3b3b] bg-[#646464] pb-[9px] text-[#dedede]"><T w={139} c="ml-[4px] mt-[3px]">Cylinder001</T></div>
          <div className="ml-[12px] h-[48px] w-[44px] border border-black bg-[#c8d65c]" />
        </div>
        <div className="mt-[22px] flex h-[39px] w-[476px] items-center border border-[#3b3b3b] bg-[#646464] pb-[2px] text-[#dedede]"><T w={143} c="ml-[4px]">Modifier List</T><Down c="ml-auto mr-[15px] h-[13px] w-[18px]" /></div>
        <div className="mt-[5px] h-[127px] w-[476px] border-2 border-[#f2f2f2] text-white">
          <div className="flex h-[40px] border-b border-[#888]"><div className="ml-[88px] flex flex-1 items-center border border-[#5f8ac3]"><T w={101} c="ml-[2px]">Edit Poly</T></div></div>
          <div className="flex h-[41px] items-center border-b border-[#888]"><T w={94} c="ml-[47px]">Cylinder</T></div>
        </div>
        <div className="mt-[7px] flex h-[58px] items-center">
          <Svg c="ml-[17px] h-[28px] w-[27px]" box="0 0 27 28"><path d="M17 0l10 10-3 2-3 0-4 5 0 5-11-8 4-3 5-5 0-3zM10 17L0 27" fill={G} stroke={G} strokeWidth="2" /></Svg>
          <div className="ml-[22px] h-4 w-[2px] bg-[#1d1d1d]" />
          <div className="ml-[5px] flex h-[58px] w-[58px] items-center justify-center rounded-[7px] bg-[#5f8ac3]"><Svg c="ml-1 h-[30px] w-[14px]" box="0 0 14 30"><path d="M2 1h10v28H2z" fill={C} stroke={G} strokeWidth="2" /><path d="M0 1h14" stroke={G} strokeWidth="3" /></Svg></div>
          <div className="ml-[6px] h-4 w-[2px] bg-[#1d1d1d]" />
          <Svg c="ml-[20px] h-[30px] w-[31px]" box="0 0 31 30"><circle cx="8" cy="8" r="7" fill="#5a5a5a" stroke="#2f2f2f" strokeWidth="2" /><circle cx="23" cy="22" r="7" fill={D} stroke="#2f2f2f" strokeWidth="2" /><circle cx="15" cy="22" r="7" fill={D} stroke="#2f2f2f" strokeWidth="2" /><path d="M16 6h10v12" stroke="#2f2f2f" strokeWidth="2.500" /></Svg>
          <Svg c="ml-[27px] h-[42px] w-[33px]" box="0 0 33 42"><path d="M9 3V1h14v2h9v6H1V3zM2 10h29v28q0 3-3 3H5q-3 0-3-3z" fill={G} stroke={D} /><path d="M9 15v20M16.500 15v20M24 15v20" stroke={D} strokeWidth="4.500" /></Svg>
          <div className="ml-[19px] h-4 w-[2px] bg-[#1d1d1d]" />
          <Svg c="ml-[20px] h-[31px] w-[31px]" box="0 0 31 31"><path d="M1 2h22v28H1z" fill={G} /><path d="M3 5h17M3 10h7v7H3zM13 10h7v7h-7zM3 20h7v7H3zM13 20h7v7h-7z" stroke={D} strokeWidth="1.500" /><path d="M26 1l4 3-14 13-5 2 1-4z" fill={O} stroke={D} strokeWidth=".5" /></Svg>
        </div>
        <div className="mt-[22px] flex h-[6px] items-center">
          <div className="ml-[14px] h-[2px] w-[192px] bg-[#6a6a6a]" />
          <svg className="ml-[12px] h-[6px] w-[40px]" viewBox="0 0 40 6"><path d="M0 1h40M3 5h34" stroke="#cfcfcf" strokeWidth="1.500" strokeDasharray="3 3" /></svg>
          <div className="ml-[11px] h-[2px] w-[192px] bg-[#6a6a6a]" />
        </div>
        <div className="mt-[11px] flex h-[1044px]">
          <div className="h-[1044px] w-[456px] overflow-hidden text-white">
            <div className="h-[323px] rounded-[4px] border border-[#3d3d3d] bg-[#525252] pt-[10px]">
              <Head w={200}>Edit Poly Mode</Head>
              <div className="mt-[27px] flex h-[30px] items-center"><div className="w-[43px]" /><Radio on /><T w={70} c="ml-[17px]">Model</T><div className="w-[79px]" /><Radio /><T w={96} c="ml-[16px]">Animate</T></div>
              <T w={289} c="ml-[79px] mt-[15px] h-7 leading-[28px]">{"<No Current Operation>"}</T>
              <div className="mt-[15px] flex"><Btn off c="ml-[139px] h-[42px] w-[171px]" w={91}>Commit</Btn></div>
              <div className="mt-[18px] flex gap-[25px]"><Btn off c="ml-[43px] h-[42px] w-[171px]" w={94}>Settings</Btn><Btn off c="h-[42px] w-[171px]" w={77}>Cancel</Btn></div>
              <div className="mt-[10px] flex h-[38px] items-center"><div className="w-[39px]" /><Check /><T w={131} c="ml-[8px]">Show Cage</T><div className="ml-[104px] h-[38px] w-[42px] border-2 border-black bg-[#ffc800]" /><div className="ml-[14px] h-[38px] w-[42px] border-2 border-black bg-[#e3e38c]" /></div>
            </div>
            <div className="mt-[11px] h-[684px] rounded-[4px] border border-[#3d3d3d] bg-[#525252] pt-[10px]">
              <Head w={122}>Selection</Head>
              <div className="mt-[19px] flex h-[54px] items-center">
                <Svg c="ml-[72px] h-[30px] w-[30px]" box="0 0 30 30"><path d="M1 15h7M4.500 11v8M22 4h7M25.500 0v8M17 26h7M20.500 22v8" stroke={C} strokeWidth="3" /></Svg>
                <Svg c="ml-[32px] h-[28px] w-[24px]" box="0 0 24 28"><path d="M1 14L23 2 16 25z" stroke={C} strokeWidth="2.500" /></Svg>
                <Svg c="ml-[33px] h-[28px] w-[24px]" box="0 0 24 28"><path d="M1 2q22-4 22 12T1 26q-2-2 2-4 12-8 0-15-4-3-2-5z" stroke={C} strokeWidth="2.500" /></Svg>
                <div className="ml-[18px] flex h-[54px] w-[56px] items-center justify-center rounded-[7px] bg-[#5f8ac3]"><div className="ml-[2px] h-[26px] w-[26px] border border-[#333] bg-[#45bfc0]" /></div>
                <Svg c="ml-[15px] h-[30px] w-[30px]" box="0 0 30 30"><path d="M15 1l14 7v15l-14 6-14-6V8z" fill={C} stroke={D} /><path d="M1 8l14 6 14-6M15 14v15" stroke={D} strokeWidth="1.500" /></Svg>
              </div>
              <div className="mt-[18px] flex h-[29px] items-center"><div className="w-[34px]" /><Check /><T w={226} c="ml-[9px]">Use Stack Selection</T></div>
              <div className="mt-[19px] flex h-[29px] items-center"><div className="w-[34px]" /><Check /><T w={112} c="ml-[9px]">By Vertex</T></div>
              <div className="mt-[20px] flex h-[29px] items-center"><div className="w-[34px]" /><Check /><T w={211} c="ml-[9px]">Ignore Backfacing</T></div>
              <div className="mt-[13px] flex h-[39px] items-center"><div className="w-[34px]" /><Check /><T w={109} c="ml-[9px]">By Angle:</T><div className="ml-[29px] flex h-[39px] w-[214px] items-center border border-[#4a4a4a] bg-[#585858] text-[#8f8f8f]"><T w={52} c="ml-[4px] mb-[2px]">45,0</T><div className="ml-auto mr-[8px]"><Spin fill="#9a9a9a" /></div></div></div>
              <div className="mt-[10px] flex gap-[13px]"><Btn c="ml-[26px] h-[42px] w-[192px]" w={75}>Shrink</Btn><Btn c="h-[42px] w-[192px]" w={63}>Grow</Btn></div>
              <div className="mt-[13px] flex h-[44px]">
                <Btn off c="ml-[26px] h-[44px] w-[160px]" w={51}>Ring</Btn><div className="ml-[5px] flex h-[40px] w-[29px] items-center justify-center border border-[#4a4a4a] bg-[#646464]"><Spin /></div>
                <Btn off c="ml-[11px] h-[44px] w-[151px]" w={56}>Loop</Btn><div className="ml-[4px] flex h-[40px] w-[29px] items-center justify-center border border-[#4a4a4a] bg-[#646464]"><Spin /></div>
              </div>
              <div className="mt-[13px] flex"><Btn c="ml-[26px] h-[42px] w-[396px]" w={225}>Get Stack Selection</Btn></div>
              <div className="relative ml-[10px] mt-[24px] h-[80px] w-[424px] rounded-[4px] border border-[#3a3a3a] pt-[32px]">
                <div className="absolute left-[11px] top-[-17px] bg-[#525252] px-[4px] leading-[35px]"><T w={203}>Preview Selection</T></div>
                <div className="flex h-[30px] items-center"><div className="w-[4px]" /><Radio on /><T w={37} c="ml-[16px]">Off</T><div className="w-[49px]" /><Radio /><T w={86} c="ml-[16px]">SubObj</T><div className="w-[32px]" /><Radio /><T w={56} c="ml-[16px]">Multi</T></div>
              </div>
              <T w={235} c="ml-[181px] mt-[14px] leading-[30px]">0 Polygons Selected</T>
            </div>
            <div className="mt-[9px] h-[100px] rounded-[4px] border border-[#3d3d3d] bg-[#525252] pt-[5px]"><Head w={150}>Soft Selection</Head></div>
          </div>
          <div className="ml-[5px] h-[1044px] w-[15px] rounded-[7px] bg-[#363636] p-[1px]"><div className="h-[288px] rounded-[7px] bg-[#5a5a5a]" /></div>
        </div>
      </div>
    </div>
  );
}

/* ---------------- time line and status ---------------- */

function TimeLine() {
  return (
    <div className="flex h-[124px]">
      <Grip id="g-tl" c="ml-[5px] mt-[16px] h-[103px] w-[10px]" />
      <div className="ml-[7px] mt-[10px] flex-1 text-[#dedede]">
        <div className="flex h-[43px] gap-[2px]">
          <div className="flex w-[38px] items-center justify-center rounded-[6px] bg-[#646464] text-[24px]">&lt;</div>
          <div className="flex w-[310px] items-center justify-center rounded-[6px] bg-[#646464]"><T w={73}>0 / 30</T></div>
          <div className="flex w-[38px] items-center justify-center rounded-[6px] bg-[#646464] text-[24px]">&gt;</div>
        </div>
        <div className="mt-[9px] flex h-[60px] border-t-2 border-[#161616]">
          <div className="flex w-[124px] items-center"><Svg c="ml-[37px] mt-[6px] h-[20px] w-[30px]" box="0 0 30 20"><path d="M2.500 0v20" stroke={G} strokeWidth="5" strokeDasharray="2 1.500" /><path d="M9 14q5-26 10 0t10-4" stroke={C} strokeWidth="2" /></Svg></div>
          <div className="relative w-[3569px] overflow-hidden bg-[#292929]">
            <div className="absolute left-[47px] top-0 h-full w-[20px] bg-[#827a1e]" />
            <div className="relative -ml-[1px] flex h-full w-[3572px]">
              {Array.from({ length: 31 }, (_, i) => (
                <div key={i} className={"flex flex-1 flex-col items-center " + (i === 0 ? "text-[#dcd66a]" : "text-[#b4b4b4]")}>
                  <div className="h-[29px] w-px bg-[#777]" />
                  <div className="mt-px flex h-[25px] justify-center leading-[27px]"><T w={i < 10 ? 13 : 27}>{String(i)}</T></div>
                  <div className="h-[4px] w-px bg-[#777]" />
                </div>
              ))}
            </div>
          </div>
        </div>
      </div>
    </div>
  );
}

function Fly() { return <Svg c="h-[10px] w-[10px]" box="0 0 10 10"><path d="M10 0v10H0z" fill="#e4e4e4" /></Svg>; }
function Field({ c = "", w, children }: { c?: string; w: number; children: string }) {
  return <div className={"flex h-[45px] w-[145px] shrink-0 items-center border border-[#3e3e3e] bg-[#585858] pb-[6px] text-[#909090] " + c}><T w={w} c="ml-[3px]">{children}</T></div>;
}
function Nav({ fly = false, children }: { fly?: boolean; children: ReactNode }) {
  return <div className="relative flex h-[55px] w-[57px] items-center justify-center"><Svg c="h-[34px] w-[34px]" box="0 0 34 34">{children}</Svg>{fly && <div className="absolute bottom-0 right-0"><Fly /></div>}</div>;
}

function StatusBar() {
  return (
    <div className="flex h-[130px] items-start text-white">
      <div className="ml-[3px] mt-[4px] w-[250px]">
        <div className="h-[60px] border-2 border-b-[#fff] border-l-[#777] border-r-[#fff] border-t-[#777] bg-[#dac3c3]" />
        <div className="mt-[2px] h-[60px] overflow-hidden border-2 border-b-[#ccc] border-l-[#777] border-r-[#ccc] border-t-[#777] bg-white pl-[4px] text-[#999]"><T w={234} c="font-['Liberation_Mono',monospace] text-[29px] leading-[34px]">MAXScript Min</T></div>
      </div>
      <div className="ml-[4px] mt-[2px] h-[126px] w-[2px] bg-black" />
      <div className="ml-[4px] w-[1377px] pt-[20px]">
        <T w={205} c="ml-px leading-[30px]">1 Object Selected</T>
        <T w={464} c="-ml-[4px] mt-[30px] leading-[30px]">:Click or click-and-drag to select objects</T>
      </div>
      <div className="w-[1098px] pt-[12px]">
        <div className="flex h-[45px] items-center">
          <Svg c="h-[30px] w-[31px]" box="0 0 31 30"><path d="M1 7V1h7M23 1h7v6M30 23v6h-7M8 29H1v-6" stroke={G} strokeWidth="2" /><path d="M9 8h13v14H9z" fill={C} /></Svg>
          <Svg c="mb-[4px] ml-[38px] h-[38px] w-[28px]" box="0 0 28 38"><path d="M6 16V9q1-7 8-7t8 7v7" stroke={G} strokeWidth="3.500" /><path d="M1 16h26v21H1z" fill={G} /><path d="M14 20a3 3 0 011 6v7h-3v-7a3 3 0 012-6z" fill={D} /></Svg>
          <Svg c="ml-[40px] h-[24px] w-[25px]" box="0 0 25 24"><path d="M1 1h23v22H1zM12.500 1v22M1 12h23" stroke={G} strokeWidth="2" /><circle cx="12.500" cy="12" r="5" fill="#444" stroke={G} strokeWidth="2" /></Svg>
          <T w={23} c="ml-[27px] mt-[3px]">X:</T><Field c="ml-[10px]" w={112}>2264,714</Field>
          <T w={23} c="ml-[34px] mt-[3px]">Y:</T><Field c="ml-[9px]" w={122}>-1653,196</Field>
          <T w={23} c="ml-[33px] mt-[3px]">Z:</T><Field c="ml-[8px]" w={38}>0,0</Field>
          <T w={152} c="ml-[35px] mt-[3px]">Grid = 100,0</T>
        </div>
        <div className="mt-[13px] flex h-[53px] items-center">
          <div className="ml-[758px] h-10 w-[2px] bg-[#1d1d1d]" />
          <div className="ml-[2px] flex h-[53px] w-[55px] items-center justify-center rounded-[7px] bg-[#5f8ac3]"><Svg c="h-[25px] w-[26px]" box="0 0 26 25"><path d="M13 1l11 6v11l-11 6-11-6V7zM2 7l11 6 11-6M13 13v11" stroke={G} strokeWidth="2.500" /></Svg></div>
          <T w={165} c="ml-[10px] mt-[2px] text-[#e2e2e2]">Add Time Tag</T>
        </div>
      </div>
      <div className="w-[307px]">
        <div className="mt-[12px] flex h-[40px] items-center">
          <Svg c="h-[20px] w-[29px]" box="0 0 29 20"><path d="M0 0h4v20H0zM16 0v20L5 10zM29 0v20L17 10z" fill={G} /></Svg>
          <div className="ml-[18px] h-10 w-[2px] bg-[#1d1d1d]" />
          <Svg c="ml-[16px] h-[20px] w-[27px]" box="0 0 27 20"><path d="M14 0v20L0 10zM16 0h4v20h-4zM23 0h4v20h-4z" fill={G} /></Svg>
          <div className="relative ml-[31px]"><Svg c="h-[27px] w-[24px]" box="0 0 24 27"><path d="M0 0l24 13.500L0 27z" fill={G} /></Svg><div className="absolute -bottom-[13px] left-[30px]"><Fly /></div></div>
          <Svg c="ml-[31px] h-[20px] w-[27px]" box="0 0 27 20"><path d="M0 0h4v20H0zM7 0h4v20H7zM13 0v20L27 10z" fill={G} /></Svg>
          <div className="ml-[19px] h-10 w-[2px] bg-[#1d1d1d]" />
          <Svg c="ml-[16px] h-[20px] w-[29px]" box="0 0 29 20"><path d="M25 0h4v20h-4zM0 0v20l12-10zM12 0v20l12-10z" fill={G} /></Svg>
        </div>
        <div className="mt-[14px] flex h-[43px] items-center">
          <Svg c="ml-[2px] h-[18px] w-[25px]" box="0 0 25 18"><path d="M10 0v18L0 9zM15 0v18l10-9z" fill={G} /></Svg>
          <div className="ml-[19px] h-10 w-[2px] bg-[#1d1d1d]" />
          <div className="ml-[3px] flex h-[43px] w-[173px] items-center border border-[#3b3b3b] bg-[#646464] text-[#dedede]"><T w={14} c="mb-[2px] ml-[4px]">0</T><div className="ml-auto mr-[7px]"><Spin /></div></div>
          <div className="ml-[4px] h-10 w-[2px] bg-[#1d1d1d]" />
          <Svg c="ml-[16px] h-[29px] w-[29px]" box="0 0 29 29"><circle cx="11" cy="11" r="11" fill={G} /><path d="M11 4v8h6" stroke={D} strokeWidth="2" /><circle cx="20" cy="20" r="6" fill="#444" stroke={O} strokeWidth="3" /><circle cx="20" cy="20" r="8" stroke={O} strokeWidth="2" strokeDasharray="3 3" /></Svg>
        </div>
      </div>
      <div className="mt-[6px] flex h-[117px] w-[108px] items-center justify-center rounded-[7px] bg-[#646464]">
        <Svg c="h-[52px] w-[52px]" box="0 0 52 52"><path d="M20 0h10v18h18v10H30v20H20V28H2V18h18z" fill={G} stroke={D} /><path d="M50 25L34 41M46 30l4 4M42 34l3 3" stroke={D} strokeWidth="6" /><path d="M50 25L34 41M46 30l4 4M42 34l3 3" stroke={C} strokeWidth="3" /><circle cx="31" cy="45" r="5" fill="#646464" stroke={C} strokeWidth="3.500" /></Svg>
      </div>
      <div className="ml-[5px] mt-[6px] flex flex-col gap-[2px]">
        <Btn c="h-[53px] w-[118px]" w={55}>Auto</Btn>
        <Btn c="h-[53px] w-[118px]" w={68}>Set K.</Btn>
      </div>
      <div className="ml-[5px] mt-[6px] w-[284px]">
        <div className="flex h-[39px] items-center border border-[#3b3b3b] bg-[#646464] text-[#dedede]"><T w={98} c="ml-[14px]">Selected</T><Down c="ml-auto mr-[11px] h-[13px] w-[18px]" /></div>
        <div className="mt-[17px] flex h-[53px]">
          <div className="relative ml-[13px] w-[28px] pt-[12px]"><Svg c="h-[28px] w-[28px]" box="0 0 28 28"><path d="M1 27Q7 24 9 3H19Q21 24 27 27" stroke={C} strokeWidth="2.500" /><path d="M0 3h28" stroke={G} strokeWidth="1.500" /><path d="M11 0h6v6h-6zM0 1h4v4H0zM24 1h4v4h-4z" fill={G} /></Svg><div className="absolute -right-[14px] bottom-0"><Fly /></div></div>
          <Btn c="ml-[19px] h-[53px] w-[223px]" w={94}>Filters...</Btn>
        </div>
      </div>
      <div className="ml-[24px] mt-[4px] grid w-[228px] grid-cols-4">
        <Nav><circle cx="21" cy="11" r="10" stroke={G} strokeWidth="3.500" /><path d="M14 19L1 34" stroke={G} strokeWidth="5" /></Nav>
        <Nav><path d="M11 2h9v12h-9zM22 2h9v12h-9zM22 16h9v9h-9z" fill={C} /><circle cx="14" cy="19" r="5" fill="#444" stroke={G} strokeWidth="2.500" /><path d="M11 23L3 31" stroke={G} strokeWidth="3" /></Nav>
        <Nav fly><path d="M4 9V3h6M25 3h6v6M31 25v6h-6M10 31H4v-6" stroke={G} strokeWidth="2" /><path d="M17.500 6L27 12v11l-9.500 5L8 23V12z" fill={C} /><path d="M8 12l9.500 5L27 12" stroke={D} /></Nav>
        <Nav fly><path d="M16 4l6-3 6 3v17l-6 4-6-4z" fill={C} stroke={D} /><path d="M16 4l6 4 6-4M22 8v17" stroke={D} strokeWidth=".8" /><path d="M9 17l6 4 0 6-5 6-8-8z" fill={G} stroke={D} /></Nav>
        <Nav><path d="M4 3h26v19H4z" stroke={G} strokeWidth="2.500" strokeDasharray="4 3" /><circle cx="13" cy="18" r="6" fill="#444" stroke={C} strokeWidth="2.500" /><path d="M9 23L3 31" stroke={C} strokeWidth="3" /></Nav>
        <Nav fly><path d="M10 19V5q2-4 4 0v10h1V2q2-4 4 0v13h1V3q2-4 4 0v13h1V8q2-3 4 0v16q-1 12-8 12h-6q-5-3-12-19 3-3 7 2z" fill={G} stroke={D} strokeWidth=".7" /></Nav>
        <Nav fly><ellipse cx="17" cy="17" rx="18" ry="9" transform="rotate(-45 17 17)" stroke={G} strokeWidth="2.500" /><path d="M5 18V12q2-8 8-8t8 8v6q-1 8-8 8t-8-8z" fill={G} /><path d="M5 15v-3q1-8 8-8v11z" fill={C} /></Nav>
        <Nav><path d="M3 3h28v28H3z" fill={G} /><path d="M6 18h9v11H6zM15 15L27 5M18 5h10v9" fill={D} stroke={D} strokeWidth="2" /></Nav>
      </div>
    </div>
  );
}

/* ---------------- taskbar ---------------- */

function TaskIcon({ line = "", tile = "", children }: { line?: string; tile?: string; children: ReactNode }) {
  return (
    <div className={"relative flex h-[100px] w-[124px] shrink-0 items-center justify-center " + tile}>
      {children}
      {line && <div className={"absolute bottom-0 h-[5px] bg-[#76b9ed] " + line} />}
    </div>
  );
}
function Adobe({ c, w, children }: { c: string; w: number; children: string }) {
  return <div className={"flex h-[56px] w-[56px] items-center justify-center border-2 font-['Open_Sans',sans-serif] text-[31px] font-semibold leading-none " + c}><T w={w}>{children}</T></div>;
}

function Taskbar() {
  return (
    <div className="flex h-[100px] bg-gradient-to-r from-[#0b0210] via-[#100107] to-[#120300] font-['Open_Sans',sans-serif] text-white">
      <div className="flex w-[126px] items-center pl-[40px]"><FaWindows className="h-[43px] w-[40px]" /></div>
      <TaskIcon line="left-[12px] w-[101px]"><Svg c="h-[56px] w-[56px]" box="0 0 56 56"><circle cx="28" cy="28" r="27" fill="#ffcd41" /><path d="M28 28L4.600 14.500A27 27 0 0151.400 14.500H28z" fill="#db4437" /><path d="M4.600 14.500A27 27 0 0028 55L39.500 34.500 28 28 16.300 34.500z" fill="#0f9d58" /><path d="M28 14.500h23.400A27 27 0 0128 55l11.700-20z" fill="#ffcd41" /><circle cx="28" cy="28" r="12.500" fill="#fff" /><circle cx="28" cy="28" r="10" fill="#4c8bf5" /></Svg></TaskIcon>
      <TaskIcon><Adobe w={31} c="border-[#00c8ff] bg-[#001d26] text-[#00c8ff]">Ps</Adobe></TaskIcon>
      <TaskIcon><Adobe w={25} c="border-[#ff3f8e] bg-[#26000f] text-[#ff3f8e]">Id</Adobe></TaskIcon>
      <TaskIcon><Adobe w={28} c="border-[#ff7c00] bg-[#261300] text-[#ff7c00]">Ai</Adobe></TaskIcon>
      <TaskIcon><div className="flex h-[60px] w-[60px] items-center justify-center bg-gradient-to-br from-[#f9dcd2] to-[#fdf3ef] font-['Liberation_Sans',sans-serif] text-[58px] font-bold leading-none text-[#c4161c]">A</div></TaskIcon>
      <TaskIcon tile="bg-[#3f3441]" line="left-[1px] w-[122px]"><MaxLogo /></TaskIcon>
      <TaskIcon line="left-[12px] w-[101px]"><Svg c="h-[46px] w-[54px]" box="0 0 54 46"><path d="M0 2q0-2 2-2h20l5 5h25q2 0 2 2v36H0z" fill="#ffe48d" /><path d="M0 2q0-2 2-2h20l5 5-5 5H0z" fill="#ffc83d" /><path d="M9 46V29q0-5 5-5h26q5 0 5 5v17h-9V34H18v12z" fill="#35b1ea" /></Svg></TaskIcon>
      <TaskIcon line="left-[12px] w-[101px]"><Svg c="h-[48px] w-[60px]" box="0 0 60 48"><path d="M0 18L30 0l30 18v30H0z" fill="#fff" /><path d="M1 17h58L38 36 34 30 1 17z" fill="#0d020a" /><path d="M4 17h52L30 34z" fill="#0d020a" /></Svg></TaskIcon>
      <TaskIcon><div className="flex h-[58px] w-[58px] items-center justify-center bg-[#3b5998]"><FaFacebookSquare className="h-[36px] w-[36px] text-white" /></div></TaskIcon>
      <TaskIcon><div className="relative flex h-[60px] w-[60px] items-center justify-center bg-[#0a7cff]"><FaFacebookMessenger className="h-[36px] w-[36px]" /><div className="absolute -bottom-[12px] -right-[20px] flex h-[38px] w-[38px] items-center justify-center rounded-full border-2 border-[#bbb] bg-[#333] text-[24px] leading-none">1</div></div></TaskIcon>
      <TaskIcon><div className="flex h-[58px] w-[58px] items-center justify-center bg-[#0a78d6]"><FaInstagram className="h-[36px] w-[36px]" /></div></TaskIcon>
      <TaskIcon><div className="flex h-[58px] w-[58px] items-center justify-center bg-black"><SiNetflix className="h-[40px] w-[40px] text-[#e50914]" /></div></TaskIcon>
      <TaskIcon><Svg c="h-[54px] w-[54px]" box="0 0 54 54"><path d="M0 54L4 40A27 27 0 1114 50z" fill="#fff" /><path d="M5 49L8 39A23 23 0 1116 46z" fill="#2cb742" /><path d="M17 14q4-4 6 0l2 6-3 4q4 8 11 10l3-4 8 4q1 7-7 8Q15 38 14 20q0-4 3-6z" fill="#fff" /></Svg></TaskIcon>
      <TaskIcon line="left-[12px] w-[101px]"><div className="relative h-[60px] w-[60px]"><div className="absolute inset-2 rounded-full bg-black" /><FaSpotify className="relative h-[60px] w-[60px] text-[#1ed760]" /></div></TaskIcon>
      <TaskIcon><Svg c="h-[60px] w-[60px]" box="0 0 60 60"><circle cx="30" cy="30" r="17" fill="#fff" /><path d="M30 1v7M30 52v7M1 30h7M52 30h7M10 10l4 4M46 46l4 4M50 10l-4 4M14 46l-4 4" stroke="#fff" strokeWidth="3.500" strokeLinecap="round" /></Svg></TaskIcon>
      <TaskIcon line="left-[12px] w-[101px]"><Svg c="h-[54px] w-[56px]" box="0 0 56 54"><path d="M48 6h8v40l-4 2z" fill="#a88a4a" /><path d="M20 3l33 4-2 44-8 2-28-10z" fill="#dfe9ea" /><path d="M20 3l30 4-17 40L0 40z" fill="#66b3c7" /><path d="M20 3l10 1-16 39L0 40z" fill="#2d7088" /><path d="M20 2l32 4" stroke="#ccc" strokeWidth="5" strokeDasharray="2 1.500" /></Svg></TaskIcon>
      <div className="ml-auto flex items-center">
        <Svg c="h-[17px] w-[32px]" box="0 0 32 17"><path d="M1 16L16 2l15 14" stroke="#fff" strokeWidth="2" /></Svg>
        <Svg c="ml-[31px] h-[30px] w-[30px]" box="0 0 30 30"><path d="M1 30Q2 3 29 1M8 30q1-19 21-21M15 30q1-12 14-13" stroke="#fff" strokeWidth="2" /><circle cx="26" cy="26" r="4" fill="#fff" /></Svg>
        <Svg c="ml-[22px] h-[28px] w-[40px]" box="0 0 40 28"><path d="M18 7h18v19H11V17M37 12h3v9h-3" stroke="#fff" strokeWidth="2" /><path d="M4 0v5M9 0v5M1 6h11v5q-1 4-5 5-5-1-6-5zM7 16v12" stroke="#fff" strokeWidth="2" /><path d="M20 10v13h-6z" fill="#fff" /></Svg>
        <Svg c="ml-[20px] h-[34px] w-[40px]" box="0 0 40 34"><path d="M1 12h5l8-8v26l-8-8H1z" stroke="#fff" strokeWidth="2" /><path d="M19 12q4 5 0 10M25 8q7 9 0 18" stroke="#fff" strokeWidth="2" /><path d="M31 2q13 15 0 30" stroke="#777" strokeWidth="2" /></Svg>
        <T w={40} c="ml-[37px] text-[28px]">ITA</T>
        <div className="ml-[43px] flex w-[150px] flex-col items-center text-[28px]">
          <T w={66} c="leading-[44px]">11:11</T>
          <T w={149} c="leading-[47px]">12/02/2018</T>
        </div>
        <Svg c="ml-[46px] h-[40px] w-[40px]" box="0 0 40 40"><path d="M1 1h38v31H24l-4 6-4-6H1z" stroke="#fff" strokeWidth="2.200" /></Svg>
        <div className="ml-[50px] mr-[11px] h-[100px] w-[2px] bg-[#6b6460]" />
      </div>
    </div>
  );
}

export default function App() {
  return (
    <div className="flex h-[2160px] w-[3840px] flex-col overflow-hidden bg-[#444] font-['Noto_Sans',sans-serif] text-[28px] leading-none">
      <TitleBar />
      <MenuBar />
      <Toolbar />
      <Ribbon />
      <div className="flex h-[1518px] shrink-0 items-start">
        <ViewTabs />
        <Explorer />
        <OrthoView />
        <TopView />
        <CommandPanel />
      </div>
      <TimeLine />
      <StatusBar />
      <Taskbar />
    </div>
  );
}
